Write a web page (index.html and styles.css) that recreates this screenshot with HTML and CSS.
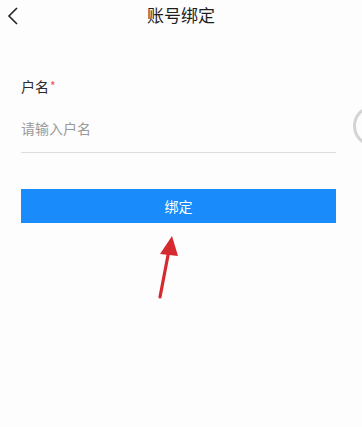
FILE: index.html
```html
<!DOCTYPE html>
<html lang="zh-CN">
<head>
<meta charset="utf-8">
<title>账号绑定</title>
<link rel="stylesheet" href="styles.css">
</head>
<body>
<div class="page">
  <header class="nav">
    <span class="back">
      <svg width="12" height="18" viewBox="0 0 12 18"><path d="M10 1 L2 9 L10 17" fill="none" stroke="#222" stroke-width="1.6" stroke-linejoin="miter"/></svg>
    </span>
    <h1 class="title">账号绑定</h1>
  </header>
  <form class="form">
    <div class="field">
      <label class="label">户名<span class="req">*</span></label>
      <div class="input">请输入户名</div>
    </div>
    <button type="button" class="btn">绑定</button>
  </form>
  <div class="ring"></div>
  <svg class="annot" width="362" height="427" viewBox="0 0 362 427">
    <line x1="169" y1="250" x2="160" y2="297" stroke="#d42a30" stroke-width="3.2" stroke-linecap="round"/>
    <polygon points="172,236 160,254 178,256" fill="#d42a30"/>
  </svg>
</div>
</body>
</html>
```
FILE: styles.css
```css
html, body {
  margin: 0;
  padding: 0;
  background: #fdfdfd;
}
.page {
  position: relative;
  width: 362px;
  height: 427px;
  overflow: hidden;
  font-family: "Noto Sans CJK SC", "Noto Sans", sans-serif;
  color: #222;
}
.nav {
  position: relative;
  height: 32px;
  display: flex;
  align-items: center;
  justify-content: center;
}
.back {
  position: absolute;
  left: 7px;
  top: 7px;
  display: flex;
}
.title {
  margin: 0 0 3px 0;
  font-size: 17px;
  font-weight: 400;
  line-height: 24px;
  color: #1e1e1e;
  padding-left: 0;
}
.form {
  margin: 44px 26px 0 21px;
  display: flex;
  flex-direction: column;
}
.field {
  display: flex;
  flex-direction: column;
  border-bottom: 1px solid #dedede;
}
.label {
  font-size: 14px;
  line-height: 20px;
  color: #2a2a2a;
}
.req {
  color: #e2574c;
  font-size: 12px;
  vertical-align: top;
  margin-left: 1px;
}
.input {
  padding: 22px 0 14px 0;
  font-size: 14px;
  line-height: 20px;
  color: #9a9a9a;
}
.btn {
  margin-top: 36px;
  height: 34px;
  border: none;
  background: #1a8bfb;
  color: #fff;
  font-family: inherit;
  font-size: 14px;
  padding: 0;
}
.ring {
  position: absolute;
  left: 353px;
  top: 106px;
  width: 32px;
  height: 34px;
  border: 3px solid #d4d4d4;
  border-radius: 50%;
}
.annot {
  position: absolute;
  left: 0;
  top: 0;
  pointer-events: none;
}
```
